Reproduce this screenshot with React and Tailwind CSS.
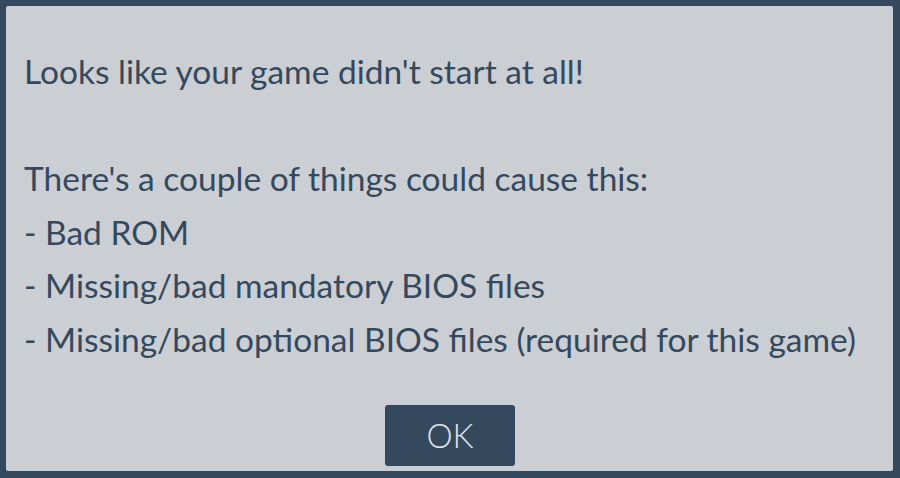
import React from "react";

export default function App() {
  const lines = [
    "Looks like your game didn't start at all!",
    "",
    "There's a couple of things could cause this:",
    "- Bad ROM",
    "- Missing/bad mandatory BIOS files",
    "- Missing/bad optional BIOS files (required for this game)",
  ];

  return (
    <div className="w-[900px] h-[478px] bg-[#34495e] pt-[6px] pl-[6px] pr-[7px] pb-[7px]">
      <div
        className="h-full bg-[#cbced3] rounded-[2px] flex flex-col pl-[18px] pt-[39px] text-[#34495e]"
        style={{ fontFamily: "Lato, 'Open Sans', sans-serif" }}
      >
        <div className="text-[33.5px] leading-[53.5px]">
          {lines.map((l, i) => (
            <div key={i} className="h-[53.5px] whitespace-pre">
              {l}
            </div>
          ))}
        </div>
        <div className="flex justify-center mt-auto mb-[5px] pr-[17px]">
          <button className="w-[130px] h-[61px] rounded-[3px] bg-[#34495e] text-[#e0e4e8] text-[33px] font-light">
            OK
          </button>
        </div>
      </div>
    </div>
  );
}
